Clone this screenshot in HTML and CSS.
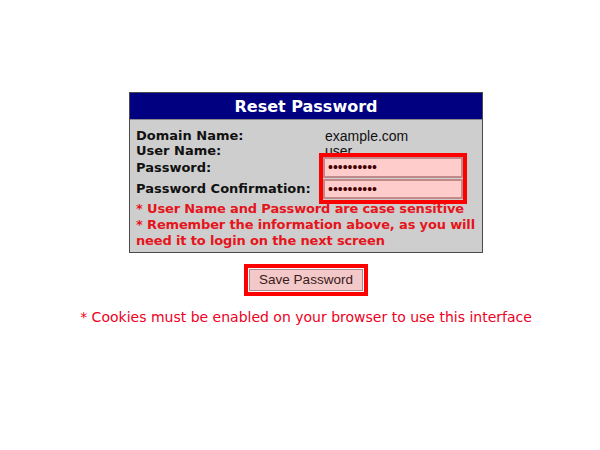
FILE: index.html
```html
<!DOCTYPE html>
<html>
<head>
<meta charset="utf-8">
<link rel="stylesheet" href="styles.css">
</head>
<body>
<div class="page">
  <div class="panel">
    <div class="panel-head">Reset Password</div>
    <div class="panel-body">
      <div class="rows">
        <div class="label">Domain Name:</div>
        <div class="value">example.com</div>
        <div class="label">User Name:</div>
        <div class="value">user</div>
        <div class="label pw">Password:</div>
        <div class="inputs">
          <input class="field" type="password" value="0123456789">
          <input class="field" type="password" value="0123456789">
        </div>
        <div class="label pw2">Password Confirmation:</div>
      </div>
      <div class="note">* User Name and Password are case sensitive</div>
      <div class="note">* Remember the information above, as you will<br>need it to login on the next screen</div>
    </div>
  </div>
  <div class="actions">
    <button class="save" type="button">Save Password</button>
  </div>
  <div class="cookies">* Cookies must be enabled on your browser to use this interface</div>
</div>
</body>
</html>
```
FILE: styles.css
```css
html, body {
  margin: 0;
  padding: 0;
  background: #ffffff;
}
.page {
  padding: 92px 0 0 12px;
  display: flex;
  flex-direction: column;
  align-items: center;
  font-family: "DejaVu Sans", Verdana, sans-serif;
}
.panel {
  width: 352px;
  border: 1px solid #4a4a4a;
  background: #cecece;
}
.panel-head {
  background: #000080;
  color: #ffffff;
  font-weight: bold;
  font-size: 16px;
  text-align: center;
  height: 26px;
  line-height: 28px;
  border-bottom: 1px solid #8a8a8a;
}
.panel-body {
  padding: 8px 2px 3px 6px;
}
.rows {
  display: grid;
  grid-template-columns: 187px 140px;
  grid-template-rows: 15px 14px 21px 22px;
  font-size: 13px;
  line-height: 16px;
}
.label {
  font-weight: bold;
  color: #111;
  white-space: nowrap;
}
.value {
  font-family: "Liberation Sans", Arial, sans-serif;
  font-size: 14px;
  color: #111;
  padding-left: 2px;
  line-height: 17px;
}
.label.pw {
  grid-column: 1;
  grid-row: 3;
  align-self: center;
}
.label.pw2 {
  grid-column: 1;
  grid-row: 4;
  align-self: center;
}
.inputs {
  grid-column: 2;
  grid-row: 3 / span 2;
  display: flex;
  flex-direction: column;
  outline: 4px solid #ff0000;
  outline-offset: 0;
}
.field {
  box-sizing: border-box;
  width: 140px;
  height: 21px;
  margin: 0 0 1px 0;
  border: 2px solid #c08a8a;
  background: #ffcccc;
  color: #400;
  font-size: 14px;
  padding: 0 3px;
  letter-spacing: 0;
}
.note {
  color: #e5151d;
  font-weight: bold;
  font-size: 13px;
  line-height: 16px;
  letter-spacing: -0.15px;
  white-space: nowrap;
}
.rows + .note {
  margin-top: 1px;
}
.actions {
  margin-top: 11px;
  border: 4px solid #ff0000;
  display: flex;
}
.save {
  font-family: "Liberation Sans", Arial, sans-serif;
  font-size: 13.5px;
  color: #3a1a1a;
  background: #f3c8c8;
  border: 1px solid #b08a8a;
  padding: 3px 9px;
  margin: 1px;
  height: 22px;
  line-height: 14px;
}
.cookies {
  margin-top: 13px;
  color: #ee0022;
  font-size: 14px;
  line-height: 16px;
}
```
